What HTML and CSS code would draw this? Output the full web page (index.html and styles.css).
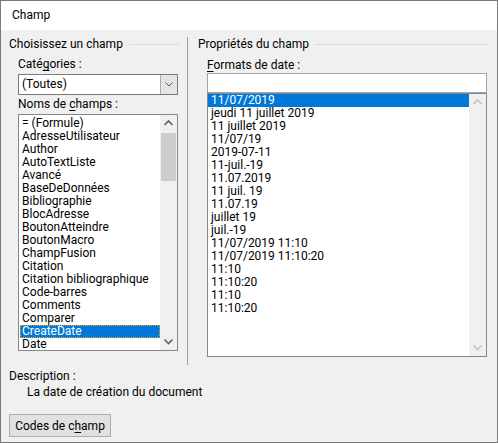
FILE: index.html
```html
<!DOCTYPE html>
<html lang="fr">
<head>
    <meta charset="UTF-8">
    <title>Champ</title>
    <link rel="stylesheet" href="styles.css">
</head>
<body>

    <!-- Field dialog -->
    <div class="dialog">
        <div class="titlebar">Champ</div>

        <div class="dialog-body">
            <div class="panels">

                <!-- Left pane: pick a field -->
                <section class="pane pane-left">
                    <h2 class="group-title">Choisissez un champ</h2>

                    <label class="field-label first">Caté<u>g</u>ories :</label>
                    <div class="combo">
                        <span class="combo-value">(Toutes)</span>
                        <span class="combo-btn">
                            <svg width="16" height="19" viewBox="0 0 16 19"><polyline points="4.5,7.5 8,11 11.5,7.5" fill="none" stroke="#555" stroke-width="1"/></svg>
                        </span>
                    </div>

                    <label class="field-label">Noms de <u>c</u>hamps :</label>
                    <div class="listbox names">
                        <ul class="items">
                            <li>= (Formule)</li>
                            <li>AdresseUtilisateur</li>
                            <li>Author</li>
                            <li>AutoTextListe</li>
                            <li>Avancé</li>
                            <li>BaseDeDonnées</li>
                            <li>Bibliographie</li>
                            <li>BlocAdresse</li>
                            <li>BoutonAtteindre</li>
                            <li>BoutonMacro</li>
                            <li>ChampFusion</li>
                            <li>Citation</li>
                            <li>Citation bibliographique</li>
                            <li>Code-barres</li>
                            <li>Comments</li>
                            <li>Comparer</li>
                            <li class="selected focused">CreateDate</li>
                            <li>Date</li>
                        </ul>
                        <div class="vscroll">
                            <span class="arrow">
                                <svg width="17" height="17" viewBox="0 0 17 17"><polyline points="4.5,10 8.5,6 12.5,10" fill="none" stroke="#606060" stroke-width="1.6"/></svg>
                            </span>
                            <span class="thumb"></span>
                            <span class="track"></span>
                            <span class="arrow">
                                <svg width="17" height="17" viewBox="0 0 17 17"><polyline points="4.5,6.5 8.5,10.5 12.5,6.5" fill="none" stroke="#606060" stroke-width="1.6"/></svg>
                            </span>
                        </div>
                    </div>
                </section>

                <div class="divider"></div>

                <!-- Right pane: field properties -->
                <section class="pane pane-right">
                    <h2 class="group-title">Propriétés du champ</h2>

                    <label class="field-label first"><u>F</u>ormats de date :</label>
                    <div class="textbox"></div>
                    <div class="listbox formats">
                        <ul class="items">
                            <li class="selected">11/07/2019</li>
                            <li>jeudi 11 juillet 2019</li>
                            <li>11 juillet 2019</li>
                            <li>11/07/19</li>
                            <li>2019-07-11</li>
                            <li>11-juil.-19</li>
                            <li>11.07.2019</li>
                            <li>11 juil. 19</li>
                            <li>11.07.19</li>
                            <li>juillet 19</li>
                            <li>juil.-19</li>
                            <li>11/07/2019 11:10</li>
                            <li>11/07/2019 11:10:20</li>
                            <li>11:10</li>
                            <li>11:10:20</li>
                            <li>11:10</li>
                            <li>11:10:20</li>
                        </ul>
                        <div class="vscroll disabled">
                            <span class="arrow">
                                <svg width="17" height="17" viewBox="0 0 17 17"><polyline points="4.5,10 8.5,6 12.5,10" fill="none" stroke="#c4c4c4" stroke-width="1.6"/></svg>
                            </span>
                            <span class="track"></span>
                            <span class="arrow">
                                <svg width="17" height="17" viewBox="0 0 17 17"><polyline points="4.5,6.5 8.5,10.5 12.5,6.5" fill="none" stroke="#c4c4c4" stroke-width="1.6"/></svg>
                            </span>
                        </div>
                    </div>
                </section>
            </div>

            <!-- Description of the selected field -->
            <div class="description">
                <div>Description :</div>
                <div class="description-text">La date de création du document</div>
            </div>

            <button class="btn">Codes de c<u>h</u>amp</button>
        </div>
    </div>

</body>
</html>
```

FILE: styles.css
```css
/* Page */
body {
    margin: 0;
    font-family: Roboto, "Noto Sans", sans-serif;
    font-size: 12px;
    color: #000;
}

u {
    text-decoration-skip-ink: none;
    text-underline-offset: 2px;
}

/* Dialog frame */
.dialog {
    width: 498px;
    height: 443px;
    box-sizing: border-box;
    border: 1px solid #7a7a7a;
    background-color: #f0f0f0;
    display: flex;
    flex-direction: column;
}

.titlebar {
    height: 29px;
    line-height: 29px;
    padding-left: 11px;
    background-color: #fff;
}

.dialog-body {
    flex: 1;
    display: flex;
    flex-direction: column;
}

.panels {
    display: flex;
    height: 335px;
}

/* Panes */
.pane {
    box-sizing: border-box;
    padding-top: 7px;
}

.pane-left {
    width: 186px;
    padding-left: 8px;
    padding-right: 8px;
}

.pane-right {
    flex: 1;
    padding-left: 10px;
    padding-right: 9px;
}

.divider {
    width: 1px;
    height: 328px;
    margin-top: 7px;
    background-color: #a0a0a0;
}

/* Group heading with trailing rule */
.group-title {
    margin: 0;
    font-size: 12px;
    font-weight: normal;
    line-height: 15px;
    display: flex;
    align-items: center;
}

.group-title::after {
    content: "";
    flex: 1;
    height: 1px;
    margin-left: 6px;
    background-color: #dcdcdc;
}

.field-label {
    display: block;
    line-height: 14px;
    margin: 2px 0 0 9px;
}

.pane-left .field-label.first {
    margin-top: 5px;
}

.pane-right .field-label.first {
    margin-top: 6px;
}

/* Combo box */
.combo {
    width: 160px;
    height: 21px;
    box-sizing: border-box;
    margin: 3px 0 0 9px;
    border: 1px solid #7a7a7a;
    background-color: #fff;
    display: flex;
}

.combo-value {
    flex: 1;
    padding-left: 3px;
    line-height: 19px;
}

.combo-btn {
    width: 16px;
    background-color: #e5e5e5;
    border-left: 1px solid #acacac;
    display: flex;
    align-items: center;
}

/* Text box */
.textbox {
    width: 280px;
    height: 20px;
    box-sizing: border-box;
    margin: 1px 0 0 9px;
    border: 1px solid #a5a5a5;
    background-color: #fff;
}

/* List boxes */
.listbox {
    box-sizing: border-box;
    border: 1px solid #828790;
    background-color: #fff;
    display: flex;
    overflow: hidden;
}

.listbox.names {
    width: 160px;
    height: 237px;
    margin: 3px 0 0 9px;
}

.listbox.formats {
    width: 280px;
    height: 264px;
    margin: 0 0 0 9px;
}

.items {
    flex: 1;
    list-style: none;
    margin: 0;
    overflow: hidden;
}

.names .items {
    padding: 2px 0 0 1px;
}

.formats .items {
    padding: 0;
}

.items li {
    height: 13px;
    line-height: 13px;
    white-space: nowrap;
}

.names .items li {
    padding-left: 2px;
}

.formats .items li {
    padding-left: 3px;
}

.items li.selected {
    background-color: #0078d7;
    color: #fff;
}

.items li.focused {
    outline: 1px dotted #f5a623;
    outline-offset: -1px;
}

/* Vertical scrollbar */
.vscroll {
    width: 17px;
    background-color: #f0f0f0;
    display: flex;
    flex-direction: column;
}

.vscroll .arrow {
    height: 17px;
    display: flex;
}

.vscroll .thumb {
    height: 48px;
    margin: 1px 1px 0 1px;
    background-color: #cdcdcd;
}

.vscroll .track {
    flex: 1;
}

/* Description */
.description {
    margin-top: 4px;
    padding-left: 8px;
    line-height: 15px;
}

.description-text {
    padding-left: 18px;
    margin-top: 1px;
}

/* Push button */
.btn {
    width: 102px;
    height: 23px;
    margin: 14px 0 0 8px;
    padding: 0;
    font-family: inherit;
    font-size: 12px;
    color: #000;
    background-color: #e1e1e1;
    border: 1px solid #adadad;
}
```
